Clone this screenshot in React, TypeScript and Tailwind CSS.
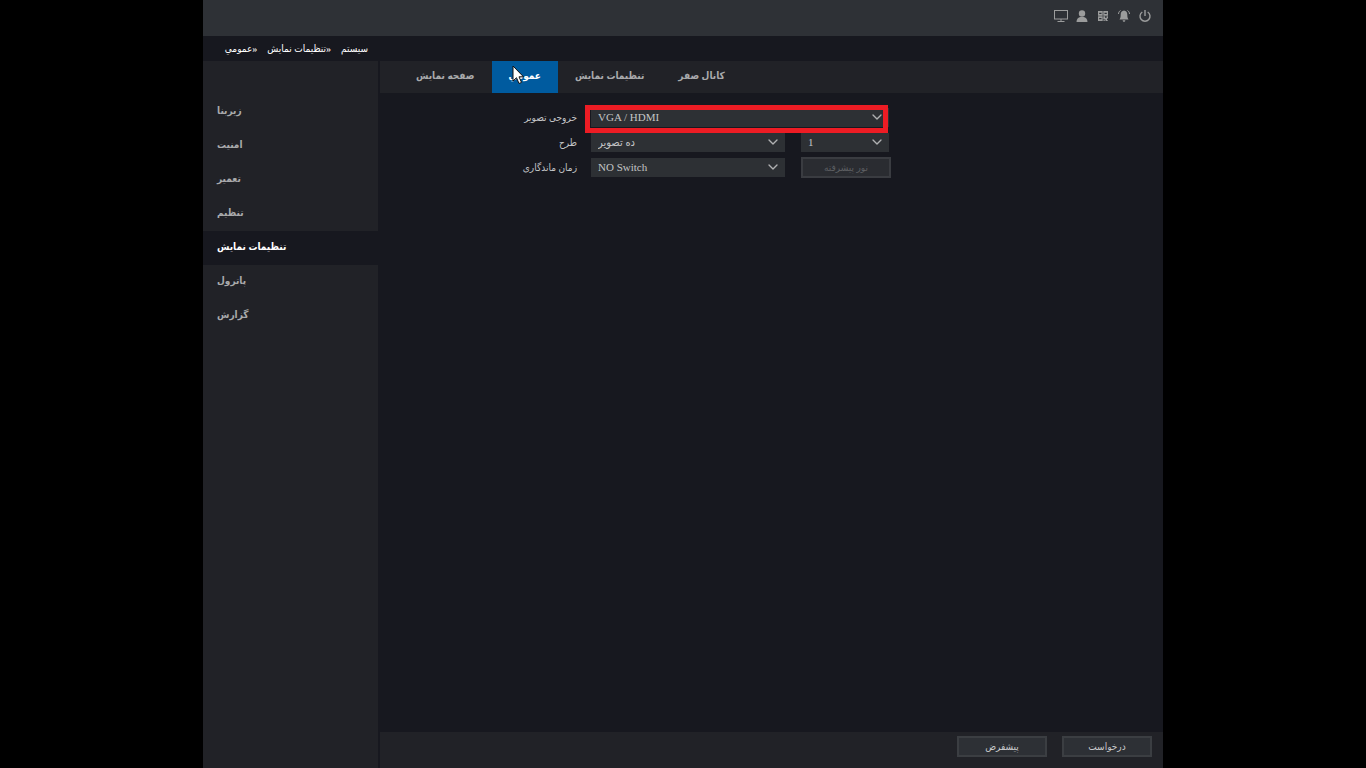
import type { ReactNode } from "react";
import { ChevronDown } from "lucide-react";

const menu = ["زیربنا", "امنیت", "تعمیر", "تنظیم", "تنظیمات نمایش", "پاترول", "گزارش"];
const tabs = ["صفحه نمایش", "عمومي", "تنظیمات نمایش", "کانال صفر"];

function StatusIcons() {
  return (
    <div className="flex items-center gap-[7px] text-[#9b9c9c]">
      <svg aria-label="Monitor" viewBox="0 0 14 14" className="h-3.5 w-3.5" fill="none" stroke="currentColor">
        <rect x="0.5" y="1.5" width="13" height="8.5" />
        <path d="M7 10v2M3.500 12.500h7" />
      </svg>
      <svg aria-label="User" viewBox="0 0 14 14" className="h-3.5 w-3.5" fill="currentColor">
        <circle cx="7" cy="4.5" r="3.2" />
        <path d="M1.500 13c0-3.200 1.800-4.500 3.800-5h3.400c2 .5 3.800 1.800 3.800 5z" />
      </svg>
      <svg aria-label="QR code" viewBox="0 0 14 14" className="h-3.5 w-3.5" fill="currentColor">
        <path fillRule="evenodd" d="M2 2h4.700v4.700H2zM3.200 3.700v1.300h2.300V3.700zM7.300 2H12v4.700H7.300zM8.500 3.700v1.300h2.300V3.700zM2 7.300h4.700V12H2zM3.200 9v1.300h2.300V9z" />
        <path d="M7.300 7.300h1.900V9h1.300V7.300H12v2.200h-1V12H9.500v-1.500H7.300zM7.300 11.200H9v.8H7.300zM11.300 11h.7v1h-.7z" />
      </svg>
      <svg aria-label="Alarm" viewBox="0 0 14 14" className="h-3.5 w-3.5" fill="currentColor">
        <path d="M7 1.500c-2.200.2-3.300 1.800-3.300 4C3.700 8 3.300 9 2.500 10.500h9C10.700 9 10.300 8 10.300 5.500c0-2.200-1.100-3.800-3.300-4zM5.700 11.300h2.600C8.300 12.300 7.800 12.800 7 12.800s-1.300-.5-1.300-1.500z" />
        <path d="M3.500 1.500C2.200 2.300 1.600 3.300 1.500 5M10.500 1.500c1.300.8 1.900 1.800 2 3.500" fill="none" stroke="currentColor" />
      </svg>
      <svg aria-label="Power" viewBox="0 0 14 14" className="h-3.5 w-3.5" fill="none" stroke="currentColor" strokeWidth="1.400">
        <path d="M4.300 3A5 5 0 1 0 9.700 3M7 1v6" />
      </svg>
    </div>
  );
}

type SelectProps = { id: string; value: string; label?: string; className?: string };

function Select({ id, value, label, className = "" }: SelectProps) {
  return (
    <div className={`relative h-[19px] bg-[#2d3034] ${className}`}>
      <select
        id={id}
        aria-label={label}
        className="block h-[19px] w-full appearance-none bg-transparent px-[7px] text-[11px] leading-[19px] text-[#c4c5c6] outline-none"
      >
        <option>{value}</option>
      </select>
      <ChevronDown className="pointer-events-none absolute top-px right-1 h-4 w-4 text-[#b0b1b2]" strokeWidth={2} />
    </div>
  );
}

function Row({ id, label, children }: { id: string; label: string; children: ReactNode }) {
  return (
    <div className="flex h-[21px] items-center">
      <label htmlFor={id} dir="rtl" className="mr-3.5 w-[197px] text-[10px] text-[#c4c5c7]">
        {label}
      </label>
      {children}
    </div>
  );
}

export default function App() {
  return (
    <div className="h-screen overflow-hidden bg-black font-['Liberation_Serif','DejaVu_Sans_Condensed','DejaVu_Sans',serif]">
      <div className="mx-auto flex aspect-[5/4] h-full flex-col bg-[#17181f]">
        <header className="flex h-9 shrink-0 items-center justify-end bg-[#2e3136] pr-[11px] pb-1">
          <StatusIcons />
        </header>

        {/* Breadcrumb */}
        <nav dir="rtl" className="flex h-[25px] w-[165px] shrink-0 items-center gap-2.5 text-[10px] whitespace-nowrap text-white">
          <a href="#system">سیستم</a>
          <a href="#display">«تنظیمات نمایش</a>
          <a href="#general">«عمومي</a>
        </nav>

        <div className="flex min-h-0 flex-1 gap-0.5">
          <aside className="w-[175px] shrink-0 bg-[#212227] pt-[34px]">
            {menu.map((item) => (
              <a
                key={item}
                href="#menu"
                className={`flex h-[34px] items-center px-3.5 pb-1 text-[10px] font-bold ${
                  item === "تنظیمات نمایش" ? "bg-[#17181f] text-white" : "text-[#a9aaac]"
                }`}
              >
                {item}
              </a>
            ))}
          </aside>

          <main className="flex min-w-0 flex-1 flex-col">
            <div role="tablist" className="flex h-8 shrink-0 bg-[#212227] pl-[19px]">
              {tabs.map((tab) => (
                <button
                  key={tab}
                  role="tab"
                  aria-selected={tab === "عمومي"}
                  className={`relative px-[17px] pb-1 text-[10px] font-bold ${
                    tab === "عمومي" ? "bg-[#005b9f] text-white" : "text-[#a9aaac]"
                  }`}
                >
                  {tab}
                  {tab === "عمومي" && (
                    <svg viewBox="0 0 12 20" className="absolute top-1 left-5 h-5 w-3">
                      <path d="M1 1v15l3.500-3.300L7 18.500l2.500-1.100L7 11.800h4.500z" fill="#fff" stroke="#111" />
                    </svg>
                  )}
                </button>
              ))}
            </div>

            <form className="flex flex-1 flex-col gap-1 pt-3.5">
              <Row id="output" label="خروجی تصویر">
                <div className="relative">
                  <Select id="output" value="VGA / HDMI" className="w-[298px]" />
                  <div className="pointer-events-none absolute -top-[3px] -left-1.5 h-7 w-[303px] border-5 border-[#ed1c24]" />
                </div>
              </Row>
              <Row id="layout" label="طرح">
                <Select id="layout" value="ده تصویر" className="mr-4 w-[194px]" />
                <Select id="page" label="Page" value="1" className="w-[88px]" />
              </Row>
              <Row id="dwell" label="زمان ماندگاری">
                <Select id="dwell" value="NO Switch" className="mr-4 w-[194px]" />
                <button type="button" disabled className="h-[21px] w-[90px] border-2 border-[#3a3c41] bg-[#2a2c31] text-[10px] leading-4 text-[#5c5e61]">
                  نور پیشرفته
                </button>
              </Row>
            </form>

            <footer className="flex h-9 shrink-0 justify-end gap-[15px] bg-[#212227] pt-1 pr-[11px]">
              <button className="h-[21px] w-[90px] border-2 border-[#3b3e42] bg-[#2d3035] text-[10px] leading-4 text-[#c8c9cb]">پیشفرض</button>
              <button className="h-[21px] w-[90px] border-2 border-[#3b3e42] bg-[#2d3035] text-[10px] leading-4 text-[#c8c9cb]">درخواست</button>
            </footer>
          </main>
        </div>
      </div>
    </div>
  );
}
